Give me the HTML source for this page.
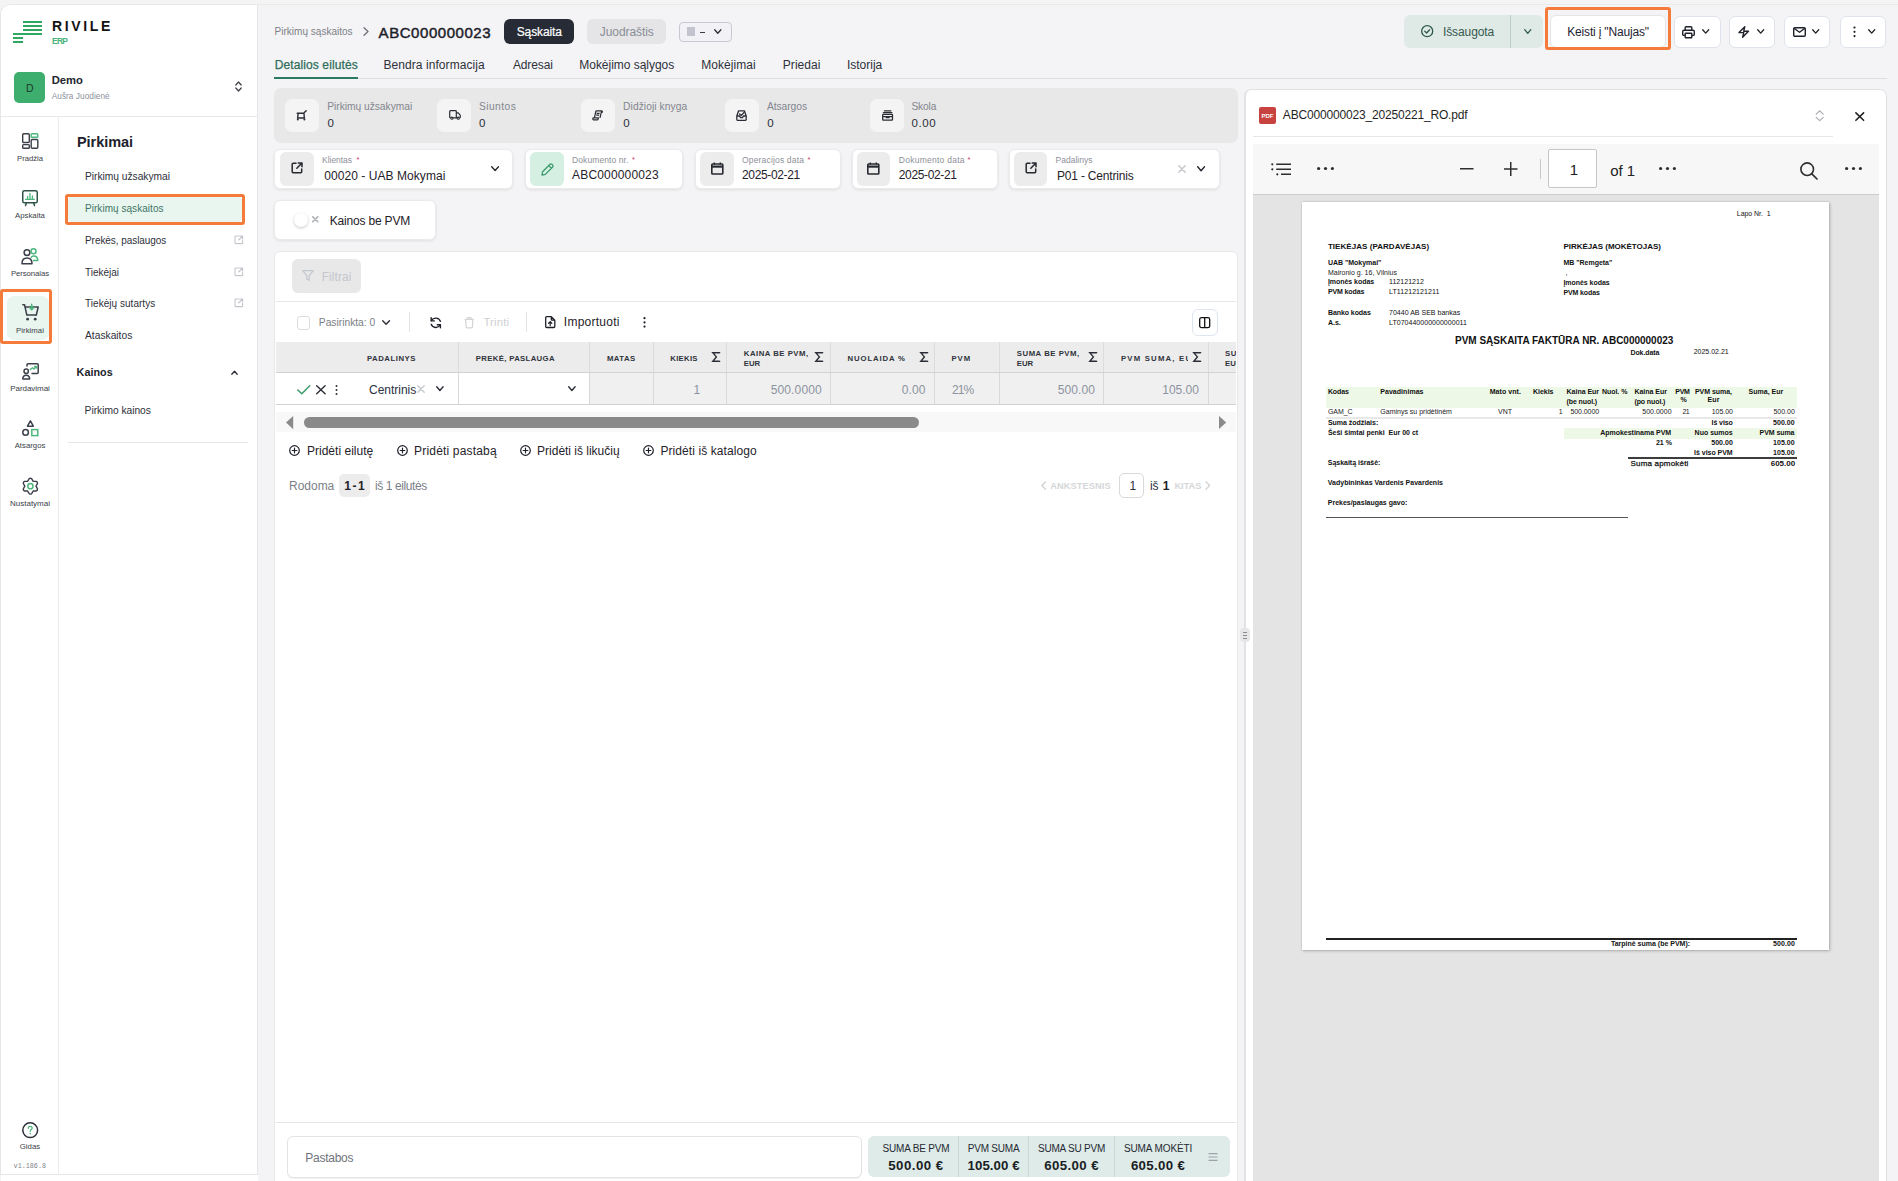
<!DOCTYPE html>
<html><head><meta charset="utf-8">
<style>
*{box-sizing:border-box;margin:0;padding:0}
html,body{width:1898px;height:1181px;overflow:hidden;background:#f4f4f4;font-family:"Liberation Sans",sans-serif;color:#20232b;position:relative}
.t{position:absolute;white-space:nowrap;line-height:1}
.r{position:absolute}
svg{position:absolute;overflow:visible}
</style></head><body>
<div class="r" style="left:258px;top:4px;width:1640px;height:1177px;background:#f4f4f6;border-top:1px solid #e9e9e9"></div>
<div class="r" style="left:0px;top:4px;width:258px;height:1171px;background:#fff;border:1px solid #e6e6e6;border-top-color:#e9e9e9;border-top-left-radius:10px"></div>
<div class="r" style="left:1px;top:1175px;width:257px;height:6px;background:#fff"></div>
<div class="r" style="left:1px;top:116px;width:257px;height:1px;background:#e9e9e9"></div>
<div class="r" style="left:58px;top:117px;width:1px;height:1057px;background:#ececec"></div>
<div class="r" style="left:23px;top:21px;width:19px;height:2px;background:#2fa862"></div>
<div class="r" style="left:23px;top:25px;width:19px;height:2px;background:#2fa862"></div>
<div class="r" style="left:23px;top:29px;width:19px;height:2px;background:#2fa862"></div>
<div class="r" style="left:13px;top:33px;width:29px;height:2px;background:#2fa862"></div>
<div class="r" style="left:13px;top:37px;width:10px;height:2px;background:#2fa862"></div>
<div class="r" style="left:13px;top:41px;width:10px;height:2px;background:#2fa862"></div>
<div class="t" style="top:19.00px;font-size:14.00px;color:#121212;font-weight:bold;letter-spacing:2.656px;left:52.00px;">RIVILE</div>
<div class="t" style="top:37.00px;font-size:8.50px;color:#48b37a;font-weight:bold;letter-spacing:-0.739px;left:52.00px;">ERP</div>
<div class="r" style="left:14px;top:72px;width:31px;height:31px;background:#3dae6e;border-radius:5px"></div>
<div class="t" style="top:83.00px;font-size:10.50px;color:#1c3b2b;left:-120.20px;width:300px;text-align:center;">D</div>
<div class="t" style="top:75.00px;font-size:11.25px;color:#22252d;font-weight:bold;letter-spacing:0.014px;left:51.70px;">Demo</div>
<div class="t" style="top:93.00px;font-size:8.25px;color:#8d919b;letter-spacing:0.051px;left:51.70px;">Aušra Juodienė</div>
<svg style="left:235px;top:81px;" width="7" height="11" viewBox="0 0 7 11" fill="none"><path d="M0.8 4 L3.5 1 L6.2 4 M0.8 7 L3.5 10 L6.2 7" stroke="#3a3d45" stroke-width="1.2" stroke-linecap="round" stroke-linejoin="round"/></svg>
<svg style="left:22px;top:133px;" width="16" height="16" viewBox="0 0 16 16" fill="none"><rect x="0.7" y="0.7" width="6.6" height="8.8" rx="1" stroke="#3b3f49" stroke-width="1.4"/>
<rect x="9.2" y="0.7" width="6.6" height="3.6" rx="0.8" stroke="#4cb77c" stroke-width="1.4"/>
<rect x="0.7" y="11.6" width="6.6" height="3.7" rx="0.8" stroke="#3b3f49" stroke-width="1.4"/>
<rect x="9.2" y="6.5" width="6.6" height="8.8" rx="1" stroke="#3b3f49" stroke-width="1.4"/></svg>
<div class="t" style="top:155.00px;font-size:7.75px;color:#3a3e48;letter-spacing:-0.046px;left:-120.00px;width:300px;text-align:center;">Pradžia</div>
<svg style="left:22px;top:190px;" width="16" height="16" viewBox="0 0 16 16" fill="none"><rect x="0.75" y="0.75" width="14.5" height="12" rx="1.6" stroke="#2f5547" stroke-width="1.5"/>
<path d="M3.5 15.5 L4.5 12.8 M12.5 15.5 L11.5 12.8" stroke="#2f5547" stroke-width="1.5" stroke-linecap="round"/>
<path d="M3.6 9.3 H12.4 M5.6 9 V6.5 M8 9 V3.5 M10.4 9 V6" stroke="#4cb77c" stroke-width="1.3" stroke-linecap="round"/></svg>
<div class="t" style="top:212.00px;font-size:7.75px;color:#3a3e48;letter-spacing:0.011px;left:-120.00px;width:300px;text-align:center;">Apskaita</div>
<svg style="left:21px;top:248px;" width="18" height="17" viewBox="0 0 18 17" fill="none"><circle cx="6" cy="4.6" r="2.9" stroke="#3b3f49" stroke-width="1.5"/>
<path d="M1 15.7 C1 11.5 3.3 10 6 10 C8.7 10 11 11.5 11 15.7 Z" stroke="#3b3f49" stroke-width="1.5" stroke-linejoin="round"/>
<circle cx="12.5" cy="3.3" r="2.5" stroke="#4cb77c" stroke-width="1.5"/>
<path d="M10.2 9.3 C10.8 8.4 11.6 8 12.5 8 C15 8 16.8 9.5 16.8 12.6 H12.5" stroke="#4cb77c" stroke-width="1.5" stroke-linecap="round" stroke-linejoin="round"/></svg>
<div class="t" style="top:270.00px;font-size:7.75px;color:#3a3e48;letter-spacing:-0.064px;left:-120.00px;width:300px;text-align:center;">Personalas</div>
<div class="r" style="left:7px;top:296px;width:42px;height:44px;background:#e9f5ef;border-radius:7px"></div>
<svg style="left:22px;top:304px;" width="17" height="17" viewBox="0 0 17 17" fill="none"><path d="M0.8 0.8 H2.6 L4.8 11 H14.3" stroke="#3b3f49" stroke-width="1.5" stroke-linecap="round" stroke-linejoin="round"/>
<path d="M3.3 3 H16.2 L14.3 11" stroke="#3b3f49" stroke-width="1.5" stroke-linecap="round" stroke-linejoin="round"/>
<circle cx="5.6" cy="15.2" r="1.4" fill="#3b3f49"/><circle cx="13.2" cy="15.2" r="1.4" fill="#3b3f49"/>
<path d="M9.7 0.3 V5.6 M7.6 3.6 L9.7 5.8 L11.8 3.6" stroke="#4cb77c" stroke-width="1.5" stroke-linecap="round" stroke-linejoin="round"/></svg>
<div class="t" style="top:327.00px;font-size:7.75px;color:#3a3e48;letter-spacing:0.063px;left:-120.00px;width:300px;text-align:center;">Pirkimai</div>
<div class="r" style="left:0px;top:289px;width:52px;height:55px;border:3px solid #f57b3a;border-radius:3px"></div>
<svg style="left:22px;top:363px;" width="17" height="17" viewBox="0 0 17 17" fill="none"><path d="M5 3 V1.8 C5 1.2 5.5 0.8 6 0.8 H15.2 C15.8 0.8 16.2 1.2 16.2 1.8 V9.5 C16.2 10 15.8 10.5 15.2 10.5 H10" stroke="#3b3f49" stroke-width="1.5" stroke-linecap="round"/>
<path d="M8.3 6.5 L10.5 4.8 L12 6 L14.2 3.5 M12.6 3.4 H14.3 V5" stroke="#4cb77c" stroke-width="1.4" stroke-linecap="round" stroke-linejoin="round"/>
<circle cx="4.2" cy="8.2" r="2.2" stroke="#3b3f49" stroke-width="1.5"/>
<path d="M0.8 16 C0.8 13.2 2.3 12.2 4.2 12.2 C6.1 12.2 7.6 13.2 7.6 16 Z" stroke="#3b3f49" stroke-width="1.5" stroke-linejoin="round"/></svg>
<div class="t" style="top:385.00px;font-size:8.00px;color:#3a3e48;letter-spacing:-0.046px;left:-120.00px;width:300px;text-align:center;">Pardavimai</div>
<svg style="left:22px;top:420px;" width="17" height="17" viewBox="0 0 17 17" fill="none"><path d="M8.4 0.9 L11.3 6.2 H5.5 Z" stroke="#3b3f49" stroke-width="1.5" stroke-linejoin="round"/>
<circle cx="3.6" cy="12.4" r="2.8" stroke="#3b3f49" stroke-width="1.5"/>
<rect x="9.8" y="9.6" width="6" height="6" stroke="#4cb77c" stroke-width="1.5"/></svg>
<div class="t" style="top:442.00px;font-size:7.75px;color:#3a3e48;letter-spacing:0.016px;left:-120.00px;width:300px;text-align:center;">Atsargos</div>
<svg style="left:22.5px;top:478px;" width="15" height="16.5" viewBox="0 0 15 16.5" fill="none"><path d="M4.60 3.35 L6.21 0.69 Q7.40 -0.10 8.59 0.69 L10.20 3.35 L13.31 3.42 Q14.59 4.05 14.50 5.48 L13.00 8.20 L14.50 10.92 Q14.59 12.35 13.31 12.98 L10.20 13.05 L8.59 15.71 Q7.40 16.50 6.21 15.71 L4.60 13.05 L1.49 12.98 Q0.21 12.35 0.30 10.92 L1.80 8.20 L0.30 5.48 Q0.21 4.05 1.49 3.42 L4.60 3.35 Z" stroke="#3b3f49" stroke-width="1.4" stroke-linejoin="round"/>
<circle cx="7.4" cy="8.2" r="2.6" stroke="#4cb77c" stroke-width="1.5"/></svg>
<div class="t" style="top:500.00px;font-size:8.00px;color:#3a3e48;letter-spacing:-0.024px;left:-120.00px;width:300px;text-align:center;">Nustatymai</div>
<svg style="left:22px;top:1122px;" width="17" height="17" viewBox="0 0 17 17" fill="none"><circle cx="8.2" cy="8.2" r="7.4" stroke="#2b2f38" stroke-width="1.5"/>
<path d="M6.3 6.3 C6.3 5.1 7.2 4.4 8.3 4.4 C9.4 4.4 10.2 5.1 10.2 6.1 C10.2 7.5 8.3 7.6 8.3 9.2" stroke="#4cb77c" stroke-width="1.3" stroke-linecap="round"/>
<circle cx="8.3" cy="11.6" r="0.8" fill="#4cb77c"/></svg>
<div class="t" style="top:1143.00px;font-size:7.75px;color:#3a3e48;letter-spacing:0.064px;left:-120.00px;width:300px;text-align:center;">Gidas</div>
<div class="t" style="top:1162.79px;font-size:6.75px;color:#7f838b;font-family:'Liberation Mono',monospace;left:-120.20px;width:300px;text-align:center;">v1.186.8</div>
<div class="t" style="top:135.00px;font-size:14.50px;color:#20232b;font-weight:bold;letter-spacing:-0.060px;left:77.00px;">Pirkimai</div>
<div class="t" style="top:172.00px;font-size:10.25px;color:#2e313a;letter-spacing:-0.027px;left:85.00px;">Pirkimų užsakymai</div>
<div class="r" style="left:68px;top:197px;width:174px;height:25px;background:#e9f5ef;border-radius:4px"></div>
<div class="t" style="top:204.00px;font-size:10.00px;color:#3d7566;letter-spacing:0.044px;left:85.00px;">Pirkimų sąskaitos</div>
<div class="r" style="left:65px;top:194px;width:180px;height:31px;border:3px solid #f57b3a;border-radius:3px"></div>
<div class="t" style="top:236.00px;font-size:10.00px;color:#2e313a;letter-spacing:-0.061px;left:85.00px;">Prekės, paslaugos</div>
<div class="t" style="top:268.00px;font-size:10.00px;color:#2e313a;left:85.00px;">Tiekėjai</div>
<div class="t" style="top:299.00px;font-size:10.00px;color:#2e313a;letter-spacing:0.036px;left:85.00px;">Tiekėjų sutartys</div>
<div class="t" style="top:331.00px;font-size:10.25px;color:#2e313a;left:85.00px;">Ataskaitos</div>
<svg style="left:234px;top:235px;" width="10" height="10" viewBox="0 0 10 10" fill="none"><path d="M4.5 1 H1.6 C1.2 1 1 1.2 1 1.6 V8 C1 8.4 1.2 8.6 1.6 8.6 H8 C8.4 8.6 8.6 8.4 8.6 8 V5.2 M5.6 1 H8.6 V4 M8.6 1 L4.6 5" stroke="#c3c6cc" stroke-width="1.1" stroke-linecap="round" stroke-linejoin="round"/></svg>
<svg style="left:234px;top:267px;" width="10" height="10" viewBox="0 0 10 10" fill="none"><path d="M4.5 1 H1.6 C1.2 1 1 1.2 1 1.6 V8 C1 8.4 1.2 8.6 1.6 8.6 H8 C8.4 8.6 8.6 8.4 8.6 8 V5.2 M5.6 1 H8.6 V4 M8.6 1 L4.6 5" stroke="#c3c6cc" stroke-width="1.1" stroke-linecap="round" stroke-linejoin="round"/></svg>
<svg style="left:234px;top:298px;" width="10" height="10" viewBox="0 0 10 10" fill="none"><path d="M4.5 1 H1.6 C1.2 1 1 1.2 1 1.6 V8 C1 8.4 1.2 8.6 1.6 8.6 H8 C8.4 8.6 8.6 8.4 8.6 8 V5.2 M5.6 1 H8.6 V4 M8.6 1 L4.6 5" stroke="#c3c6cc" stroke-width="1.1" stroke-linecap="round" stroke-linejoin="round"/></svg>
<div class="t" style="top:367.00px;font-size:10.75px;color:#20232b;font-weight:bold;letter-spacing:0.052px;left:76.60px;">Kainos</div>
<svg style="left:231px;top:370px;" width="7" height="5" viewBox="0 0 7 5" fill="none"><path d="M0.8 4.2 L3.5 1.2 L6.2 4.2" stroke="#2b2e36" stroke-width="1.3" stroke-linecap="round" stroke-linejoin="round"/></svg>
<div class="t" style="top:406.00px;font-size:10.25px;color:#2e313a;letter-spacing:-0.027px;left:84.60px;">Pirkimo kainos</div>
<div class="r" style="left:68px;top:442px;width:180px;height:1px;background:#e6e6e6"></div>
<div class="t" style="top:27.00px;font-size:10.00px;color:#7c7f87;letter-spacing:0.013px;left:274.60px;">Pirkimų sąskaitos</div>
<svg style="left:362.5px;top:27px;" width="6" height="9" viewBox="0 0 6 9" fill="none"><path d="M1 0.8 L5 4.5 L1 8.2" stroke="#6d7078" stroke-width="1.3" stroke-linecap="round" stroke-linejoin="round"/></svg>
<div class="t" style="top:25.00px;font-size:15.00px;color:#1d2029;letter-spacing:0.552px;left:378.60px;-webkit-text-stroke:0.45px #1d2029">ABC000000023</div>
<div class="r" style="left:504px;top:19px;width:70px;height:25px;background:#272b36;border-radius:6px"></div>
<div class="t" style="top:26.00px;font-size:12.00px;color:#ffffff;letter-spacing:-0.118px;left:516.70px;-webkit-text-stroke:0.2px #fff">Sąskaita</div>
<div class="r" style="left:587px;top:19px;width:79px;height:25px;background:#e5e5e7;border-radius:6px"></div>
<div class="t" style="top:26.00px;font-size:12.00px;color:#8a8d95;letter-spacing:-0.077px;left:599.80px;">Juodraštis</div>
<div class="r" style="left:679px;top:22px;width:53px;height:20px;background:#f1f1f6;border:1px solid #c8c9d3;border-radius:4px"></div>
<div class="r" style="left:687px;top:27px;width:8px;height:9px;background:#c3c3cf"></div>
<div class="r" style="left:700px;top:32px;width:5px;height:1px;background:#3a3d45"></div>
<svg style="left:713.6px;top:29px;" width="7.6" height="5" viewBox="0 0 7.6 5" fill="none"><path d="M0.7 0.7 L3.8 4.3 L6.8999999999999995 0.7" stroke="#2b2e36" stroke-width="1.3" stroke-linecap="round" stroke-linejoin="round"/></svg>
<div class="r" style="left:1404px;top:15px;width:139px;height:33px;background:#dfe9e6;border-radius:6px"></div>
<div class="r" style="left:1510px;top:15px;width:1px;height:33px;background:#b9cec6"></div>
<svg style="left:1421px;top:25.3px;" width="12.5" height="12.5" viewBox="0 0 12.5 12.5" fill="none"><circle cx="6.2" cy="6.2" r="5.5" stroke="#2d5a4b" stroke-width="1.3"/><path d="M3.8 6.3 L5.6 8 L8.6 4.8" stroke="#2d5a4b" stroke-width="1.3" stroke-linecap="round" stroke-linejoin="round"/></svg>
<div class="t" style="top:26.00px;font-size:12.00px;color:#35594d;letter-spacing:-0.105px;left:1443.00px;">Išsaugota</div>
<svg style="left:1523.7px;top:29px;" width="7.5" height="5" viewBox="0 0 7.5 5" fill="none"><path d="M0.7 0.7 L3.75 4.3 L6.8 0.7" stroke="#2d5a4b" stroke-width="1.3" stroke-linecap="round" stroke-linejoin="round"/></svg>
<div class="r" style="left:1550px;top:15px;width:116px;height:33px;background:#fff;border:1px solid #e6e6e6;border-radius:6px"></div>
<div class="t" style="top:26.00px;font-size:12.00px;color:#1f2330;letter-spacing:-0.178px;left:1567.30px;">Keisti į &quot;Naujas&quot;</div>
<div class="r" style="left:1545px;top:7px;width:126px;height:43px;border:3px solid #f57b3a;border-radius:3px"></div>
<div class="r" style="left:1674px;top:16px;width:47px;height:32px;background:#fff;border:1px solid #dfe4ec;border-radius:6px"></div>
<div class="r" style="left:1729px;top:16px;width:46px;height:32px;background:#fff;border:1px solid #dfe4ec;border-radius:6px"></div>
<div class="r" style="left:1784px;top:16px;width:46px;height:32px;background:#fff;border:1px solid #dfe4ec;border-radius:6px"></div>
<div class="r" style="left:1840px;top:16px;width:46px;height:32px;background:#fff;border:1px solid #dfe4ec;border-radius:6px"></div>
<svg style="left:1682.3px;top:25.5px;" width="13" height="12.5" viewBox="0 0 13 12.5" fill="none"><path d="M3.2 4.3 V1.6 C3.2 1.1 3.6 0.7 4.1 0.7 H8.9 C9.4 0.7 9.8 1.1 9.8 1.6 V4.3" stroke="#1e2129" stroke-width="1.4"/><path d="M3 9.4 H1.9 C1.2 9.4 0.7 8.9 0.7 8.2 V5.5 C0.7 4.8 1.2 4.3 1.9 4.3 H11.1 C11.8 4.3 12.3 4.8 12.3 5.5 V8.2 C12.3 8.9 11.8 9.4 11.1 9.4 H10" stroke="#1e2129" stroke-width="1.4"/><rect x="3.2" y="7.2" width="6.6" height="4.6" rx="0.6" stroke="#1e2129" stroke-width="1.4"/></svg>
<svg style="left:1701.9px;top:29.2px;" width="7.4" height="4.8" viewBox="0 0 7.4 4.8" fill="none"><path d="M0.7 0.7 L3.7 4.1 L6.7 0.7" stroke="#1e2129" stroke-width="1.3" stroke-linecap="round" stroke-linejoin="round"/></svg>
<svg style="left:1738px;top:25.7px;" width="11.5" height="12" viewBox="0 0 11.5 12" fill="none"><path d="M6.8 0.7 L1 6.6 H5.8 L4.6 11.3 L10.5 5.3 H5.7 Z" stroke="#1e2129" stroke-width="1.4" stroke-linejoin="round"/></svg>
<svg style="left:1757px;top:29.2px;" width="7.4" height="4.8" viewBox="0 0 7.4 4.8" fill="none"><path d="M0.7 0.7 L3.7 4.1 L6.7 0.7" stroke="#1e2129" stroke-width="1.3" stroke-linecap="round" stroke-linejoin="round"/></svg>
<svg style="left:1793px;top:26.5px;" width="13" height="10" viewBox="0 0 13 10" fill="none"><rect x="0.7" y="0.7" width="11.6" height="8.6" rx="1.2" stroke="#1e2129" stroke-width="1.4"/><path d="M1 1.3 L6.5 5.3 L12 1.3" stroke="#1e2129" stroke-width="1.4" stroke-linejoin="round"/></svg>
<svg style="left:1812px;top:29.2px;" width="7.4" height="4.8" viewBox="0 0 7.4 4.8" fill="none"><path d="M0.7 0.7 L3.7 4.1 L6.7 0.7" stroke="#1e2129" stroke-width="1.3" stroke-linecap="round" stroke-linejoin="round"/></svg>
<svg style="left:1853px;top:26px;" width="3" height="12" viewBox="0 0 3 12" fill="none"><circle cx="1.5" cy="1.5" r="1.1" fill="#1e2129"/><circle cx="1.5" cy="5.8" r="1.1" fill="#1e2129"/><circle cx="1.5" cy="10.1" r="1.1" fill="#1e2129"/></svg>
<svg style="left:1867.7px;top:29.2px;" width="7.4" height="4.8" viewBox="0 0 7.4 4.8" fill="none"><path d="M0.7 0.7 L3.7 4.1 L6.7 0.7" stroke="#1e2129" stroke-width="1.3" stroke-linecap="round" stroke-linejoin="round"/></svg>
<div class="r" style="left:274px;top:78px;width:1613px;height:1px;background:#dedee0"></div>
<div class="t" style="top:59.00px;font-size:12.00px;color:#2f6e5a;letter-spacing:0.108px;left:274.70px;-webkit-text-stroke:0.25px #2f6e5a">Detalios eilutės</div>
<div class="r" style="left:274px;top:77px;width:84px;height:2px;background:#2b7a5f"></div>
<div class="t" style="top:59.00px;font-size:12.00px;color:#2e313a;letter-spacing:0.067px;left:383.50px;">Bendra informacija</div>
<div class="t" style="top:59.00px;font-size:12.00px;color:#2e313a;letter-spacing:-0.098px;left:512.90px;">Adresai</div>
<div class="t" style="top:59.00px;font-size:12.00px;color:#2e313a;letter-spacing:-0.031px;left:579.30px;">Mokėjimo sąlygos</div>
<div class="t" style="top:59.00px;font-size:12.00px;color:#2e313a;letter-spacing:0.073px;left:701.20px;">Mokėjimai</div>
<div class="t" style="top:59.00px;font-size:12.00px;color:#2e313a;letter-spacing:0.041px;left:782.80px;">Priedai</div>
<div class="t" style="top:59.00px;font-size:12.00px;color:#2e313a;left:846.90px;">Istorija</div>
<div class="r" style="left:274px;top:88px;width:964px;height:55px;background:#e8e8e8;border-radius:7px"></div>
<div class="r" style="left:285px;top:99px;width:34px;height:33px;background:#f4f4f4;border-radius:7px"></div>
<svg style="left:296.40000000000003px;top:110px;" width="11" height="11" viewBox="0 0 11 11" fill="none"><path d="M1.2 3.2 H8 M2.2 3.2 L1.6 8 H8.6 M8 3.2 L8.3 8 M8.3 2.6 L10.2 0.8" stroke="#2a2d35" stroke-width="1.4" stroke-linecap="round" stroke-linejoin="round"/><circle cx="1.8" cy="9.4" r="1" fill="#2a2d35"/><circle cx="8.4" cy="9.4" r="1" fill="#2a2d35"/></svg>
<div class="t" style="top:102.00px;font-size:10.25px;color:#83868f;letter-spacing:-0.027px;left:327.20px;">Pirkimų užsakymai</div>
<div class="t" style="top:118.00px;font-size:11.50px;color:#2a2e3a;letter-spacing:0.204px;left:327.40px;">0</div>
<div class="r" style="left:437px;top:99px;width:34px;height:33px;background:#f4f4f4;border-radius:7px"></div>
<svg style="left:448.5px;top:110px;" width="11" height="11" viewBox="0 0 11 11" fill="none"><path d="M1.8 7.8 H1.4 C1 7.8 0.7 7.5 0.7 7.1 V1.4 C0.7 1 1 0.7 1.4 0.7 H6.6 C7 0.7 7.3 1 7.3 1.4 V7.8 H4 M7.3 2.8 H9.3 L11.3 5.3 V7.1 C11.3 7.5 11 7.8 10.6 7.8 M7.3 7.8 H8" stroke="#2a2d35" stroke-width="1.2" stroke-linejoin="round"/><circle cx="2.9" cy="8.2" r="1.1" stroke="#2a2d35" stroke-width="1.1"/><circle cx="9.3" cy="8.2" r="1.1" stroke="#2a2d35" stroke-width="1.1"/></svg>
<div class="t" style="top:102.00px;font-size:10.25px;color:#83868f;letter-spacing:0.468px;left:478.90px;">Siuntos</div>
<div class="t" style="top:118.00px;font-size:11.50px;color:#2a2e3a;letter-spacing:0.204px;left:479.10px;">0</div>
<div class="r" style="left:581px;top:99px;width:34px;height:33px;background:#f4f4f4;border-radius:7px"></div>
<svg style="left:592.3px;top:110px;" width="11" height="11" viewBox="0 0 11 11" fill="none"><path d="M3 9.8 H1.6 C1 9.8 0.7 9.3 0.8 8.8 L1.2 7.8 H6.5 L6 9.4 C5.9 9.7 5.6 9.9 5.3 9.9 H3 M2.4 7.8 L3.8 1.5 C3.9 1 4.3 0.8 4.8 0.8 H9.6 L8 7.8 M4.6 3.3 H7.6 M4.2 5.2 H7.2 M9.6 0.8 C10.3 0.8 10.5 1.5 10.2 2.3 H8.8" stroke="#2a2d35" stroke-width="1.2" stroke-linejoin="round"/></svg>
<div class="t" style="top:102.00px;font-size:10.25px;color:#83868f;letter-spacing:0.059px;left:623.10px;">Didžioji knyga</div>
<div class="t" style="top:118.00px;font-size:11.50px;color:#2a2e3a;letter-spacing:0.204px;left:623.30px;">0</div>
<div class="r" style="left:725px;top:99px;width:34px;height:33px;background:#f4f4f4;border-radius:7px"></div>
<svg style="left:736.1999999999999px;top:110px;" width="11" height="11" viewBox="0 0 11 11" fill="none"><path d="M0.8 6 L2.6 0.8 H8.4 L10.2 6 V9.6 C10.2 10 9.9 10.3 9.5 10.3 H1.5 C1.1 10.3 0.8 10 0.8 9.6 Z M0.8 6 H3.6 L4.5 7.6 H6.5 L7.4 6 H10.2" stroke="#2a2d35" stroke-width="1.3" stroke-linejoin="round"/><path d="M3.5 4 L5.2 5.5 L8 2.5" stroke="#2a2d35" stroke-width="1.2" stroke-linecap="round" stroke-linejoin="round"/></svg>
<div class="t" style="top:102.00px;font-size:10.25px;color:#83868f;letter-spacing:-0.064px;left:767.00px;">Atsargos</div>
<div class="t" style="top:118.00px;font-size:11.50px;color:#2a2e3a;letter-spacing:0.204px;left:767.20px;">0</div>
<div class="r" style="left:870px;top:99px;width:34px;height:33px;background:#f4f4f4;border-radius:7px"></div>
<svg style="left:881.5999999999999px;top:110px;" width="11" height="11" viewBox="0 0 11 11" fill="none"><path d="M2.3 0.8 H8.9 M1.3 2.7 H9.9" stroke="#2a2d35" stroke-width="1.2" stroke-linecap="round"/><rect x="0.7" y="4.4" width="9.8" height="5.8" rx="0.6" stroke="#2a2d35" stroke-width="1.3"/><path d="M0.8 6.6 H10.4 M4.2 6.6 V7.6 H7 V6.6" stroke="#2a2d35" stroke-width="1.1"/></svg>
<div class="t" style="top:102.00px;font-size:10.25px;color:#83868f;letter-spacing:-0.160px;left:911.40px;">Skola</div>
<div class="t" style="top:118.00px;font-size:11.50px;color:#2a2e3a;letter-spacing:0.539px;left:911.60px;">0.00</div>
<div class="r" style="left:274px;top:149px;width:239px;height:40px;background:#fff;border:1px solid #ebebeb;border-radius:6px;box-shadow:0 1px 3px rgba(0,0,0,0.09)"></div>
<div class="r" style="left:280px;top:152px;width:34px;height:34px;background:#ececec;border-radius:6px"></div>
<svg style="left:290.5px;top:161.5px;" width="12" height="12" viewBox="0 0 12 12" fill="none"><path d="M5 1.3 H2.2 C1.6 1.3 1.2 1.7 1.2 2.3 V9.8 C1.2 10.4 1.6 10.8 2.2 10.8 H9.7 C10.3 10.8 10.7 10.4 10.7 9.8 V7" stroke="#262930" stroke-width="1.5" stroke-linecap="round"/><path d="M7.2 1 H11 V4.8 M11 1 L5.8 6.2" stroke="#262930" stroke-width="1.5" stroke-linecap="round" stroke-linejoin="round"/></svg>
<div class="t" style="top:156.00px;font-size:8.50px;color:#8d9099;letter-spacing:-0.055px;left:322.10px;">Klientas</div>
<div class="t" style="top:156.00px;font-size:7.50px;color:#d6336c;left:356.50px;">*</div>
<div class="t" style="top:170.00px;font-size:12.00px;color:#1f2229;letter-spacing:0.064px;left:324.20px;">00020 - UAB Mokymai</div>
<svg style="left:491px;top:166px;" width="8.2" height="5.2" viewBox="0 0 8.2 5.2" fill="none"><path d="M0.7 0.7 L4.1 4.5 L7.499999999999999 0.7" stroke="#262930" stroke-width="1.4" stroke-linecap="round" stroke-linejoin="round"/></svg>
<div class="r" style="left:525px;top:149px;width:158px;height:40px;background:#fff;border:1px solid #ebebeb;border-radius:6px;box-shadow:0 1px 3px rgba(0,0,0,0.09)"></div>
<div class="r" style="left:530px;top:152px;width:34px;height:34px;background:#d5f0e3;border-radius:6px"></div>
<svg style="left:540.5px;top:162.5px;" width="13" height="13" viewBox="0 0 13 13" fill="none"><path d="M9 1.3 C9.5 0.8 10.3 0.8 10.8 1.3 L11.7 2.2 C12.2 2.7 12.2 3.5 11.7 4 L4.3 11.4 L1 12 L1.6 8.7 Z M7.8 2.6 L10.4 5.2" stroke="#3a9a6c" stroke-width="1.3" stroke-linejoin="round"/></svg>
<div class="t" style="top:156.00px;font-size:8.50px;color:#8d9099;letter-spacing:0.072px;left:572.10px;">Dokumento nr.</div>
<div class="t" style="top:156.00px;font-size:7.50px;color:#d6336c;left:632.00px;">*</div>
<div class="t" style="top:169.00px;font-size:12.00px;color:#1f2229;letter-spacing:0.160px;left:572.10px;">ABC000000023</div>
<div class="r" style="left:695px;top:149px;width:146px;height:40px;background:#fff;border:1px solid #ebebeb;border-radius:6px;box-shadow:0 1px 3px rgba(0,0,0,0.09)"></div>
<div class="r" style="left:700px;top:152px;width:34px;height:34px;background:#ececec;border-radius:6px"></div>
<svg style="left:710.6px;top:162.3px;" width="12.6" height="12.6" viewBox="0 0 12.6 12.6" fill="none"><rect x="0.8" y="2" width="11" height="10" rx="0.8" stroke="#262930" stroke-width="1.6"/><path d="M0.8 4.6 H11.8" stroke="#262930" stroke-width="2.2"/><path d="M3.3 0.6 V2.6 M9.3 0.6 V2.6" stroke="#262930" stroke-width="1.4"/></svg>
<div class="t" style="top:156.00px;font-size:8.50px;color:#8d9099;letter-spacing:0.169px;left:742.00px;">Operacijos data</div>
<div class="t" style="top:156.00px;font-size:7.50px;color:#d6336c;left:807.50px;">*</div>
<div class="t" style="top:169.00px;font-size:12.00px;color:#1f2229;letter-spacing:-0.354px;left:742.00px;">2025-02-21</div>
<div class="r" style="left:852px;top:149px;width:146px;height:40px;background:#fff;border:1px solid #ebebeb;border-radius:6px;box-shadow:0 1px 3px rgba(0,0,0,0.09)"></div>
<div class="r" style="left:857px;top:152px;width:33px;height:34px;background:#ececec;border-radius:6px"></div>
<svg style="left:867.2px;top:162.3px;" width="12.6" height="12.6" viewBox="0 0 12.6 12.6" fill="none"><rect x="0.8" y="2" width="11" height="10" rx="0.8" stroke="#262930" stroke-width="1.6"/><path d="M0.8 4.6 H11.8" stroke="#262930" stroke-width="2.2"/><path d="M3.3 0.6 V2.6 M9.3 0.6 V2.6" stroke="#262930" stroke-width="1.4"/></svg>
<div class="t" style="top:156.00px;font-size:8.50px;color:#8d9099;letter-spacing:0.258px;left:898.80px;">Dokumento data</div>
<div class="t" style="top:156.00px;font-size:7.50px;color:#d6336c;left:967.50px;">*</div>
<div class="t" style="top:169.00px;font-size:12.00px;color:#1f2229;letter-spacing:-0.354px;left:898.80px;">2025-02-21</div>
<div class="r" style="left:1009px;top:149px;width:211px;height:40px;background:#fff;border:1px solid #ebebeb;border-radius:6px;box-shadow:0 1px 3px rgba(0,0,0,0.09)"></div>
<div class="r" style="left:1014px;top:152px;width:33px;height:34px;background:#ececec;border-radius:6px"></div>
<svg style="left:1024.5px;top:161.5px;" width="12" height="12" viewBox="0 0 12 12" fill="none"><path d="M5 1.3 H2.2 C1.6 1.3 1.2 1.7 1.2 2.3 V9.8 C1.2 10.4 1.6 10.8 2.2 10.8 H9.7 C10.3 10.8 10.7 10.4 10.7 9.8 V7" stroke="#262930" stroke-width="1.5" stroke-linecap="round"/><path d="M7.2 1 H11 V4.8 M11 1 L5.8 6.2" stroke="#262930" stroke-width="1.5" stroke-linecap="round" stroke-linejoin="round"/></svg>
<div class="t" style="top:156.00px;font-size:8.50px;color:#8d9099;left:1055.60px;">Padalinys</div>
<div class="t" style="top:170.00px;font-size:12.00px;color:#1f2229;letter-spacing:-0.191px;left:1057.00px;">P01 - Centrinis</div>
<svg style="left:1178.3px;top:164.7px;" width="8" height="8" viewBox="0 0 8 8" fill="none"><path d="M0.8 0.8 L7.2 7.2 M7.2 0.8 L0.8 7.2" stroke="#c5c8cd" stroke-width="1.5" stroke-linecap="round"/></svg>
<svg style="left:1196.8px;top:165.7px;" width="8.2" height="5.5" viewBox="0 0 8.2 5.5" fill="none"><path d="M0.7 0.7 L4.1 4.8 L7.499999999999999 0.7" stroke="#262930" stroke-width="1.4" stroke-linecap="round" stroke-linejoin="round"/></svg>
<div class="r" style="left:274px;top:200px;width:162px;height:40px;background:#fff;border:1px solid #ebebeb;border-radius:6px;box-shadow:0 1px 3px rgba(0,0,0,0.09)"></div>
<div class="r" style="left:294px;top:213px;width:14px;height:14px;background:#fff;border-radius:50%;box-shadow:0 1px 3px rgba(0,0,0,0.22)"></div>
<svg style="left:312px;top:216.3px;" width="6.5" height="6.5" viewBox="0 0 6.5 6.5" fill="none"><path d="M0.8 0.8 L5.7 5.7 M5.7 0.8 L0.8 5.7" stroke="#b5b7bb" stroke-width="1.8" stroke-linecap="round"/></svg>
<div class="t" style="top:215.00px;font-size:12.00px;color:#1f2229;letter-spacing:-0.193px;left:329.80px;">Kainos be PVM</div>
<div class="r" style="left:274px;top:251px;width:964px;height:940px;background:#fff;border:1px solid #e7e7e7;border-radius:6px"></div>
<div class="r" style="left:292px;top:259px;width:69px;height:34px;background:#e8e8e8;border-radius:6px"></div>
<svg style="left:301.5px;top:269.8px;" width="12" height="11" viewBox="0 0 12 11" fill="none"><path d="M0.7 0.7 H11.3 L7.2 5.6 V10.3 L4.8 9 V5.6 Z" stroke="#c2c6cd" stroke-width="1.2" stroke-linejoin="round"/></svg>
<div class="t" style="top:271.00px;font-size:12.00px;color:#c4c7cd;letter-spacing:0.078px;left:321.70px;">Filtrai</div>
<div class="r" style="left:276px;top:301px;width:960px;height:1px;background:#e7e7e7"></div>
<div class="r" style="left:297px;top:316px;width:13px;height:14px;background:#fff;border:1px solid #dcdcdc;border-radius:3px"></div>
<div class="t" style="top:318.00px;font-size:10.25px;color:#7a7e86;left:318.80px;">Pasirinkta: 0</div>
<svg style="left:381.8px;top:320.3px;" width="8.2" height="5" viewBox="0 0 8.2 5" fill="none"><path d="M0.7 0.7 L4.1 4.3 L7.499999999999999 0.7" stroke="#2b2e36" stroke-width="1.4" stroke-linecap="round" stroke-linejoin="round"/></svg>
<div class="r" style="left:409px;top:312px;width:1px;height:20px;background:#e3e3e3"></div>
<svg style="left:429.7px;top:316.7px;" width="11.6" height="11.6" viewBox="0 0 11.6 11.6" fill="none"><path d="M10.4 4.3 A5 5 0 0 0 1.4 3.6 M1.2 7.3 A5 5 0 0 0 10.2 8" stroke="#1e2129" stroke-width="1.4" stroke-linecap="round"/><path d="M1.2 0.8 V3.9 H4.3 M10.4 10.8 V7.7 H7.3" stroke="#1e2129" stroke-width="1.4" stroke-linecap="round" stroke-linejoin="round"/></svg>
<svg style="left:464.1px;top:316.8px;" width="10.5" height="11.6" viewBox="0 0 10.5 11.6" fill="none"><path d="M0.7 2.3 H9.8 M3.4 2.3 V1.2 C3.4 0.9 3.6 0.7 3.9 0.7 H6.6 C6.9 0.7 7.1 0.9 7.1 1.2 V2.3 M1.6 2.3 L2.2 10.2 C2.2 10.6 2.5 10.9 2.9 10.9 H7.6 C8 10.9 8.3 10.6 8.3 10.2 L8.9 2.3" stroke="#d3d3d3" stroke-width="1.2" stroke-linejoin="round"/></svg>
<div class="t" style="top:317.00px;font-size:11.50px;color:#cfd0d2;letter-spacing:0.114px;left:483.40px;">Trinti</div>
<div class="r" style="left:526px;top:312px;width:1px;height:20px;background:#e3e3e3"></div>
<svg style="left:545.3px;top:316.2px;" width="10.5" height="12.2" viewBox="0 0 10.5 12.2" fill="none"><path d="M6.3 0.7 H1.7 C1.1 0.7 0.7 1.1 0.7 1.7 V10.5 C0.7 11.1 1.1 11.5 1.7 11.5 H8.8 C9.4 11.5 9.8 11.1 9.8 10.5 V4.2 Z M6.3 0.7 V3.4 C6.3 3.8 6.6 4.2 7 4.2 H9.8" stroke="#1e2129" stroke-width="1.3" stroke-linejoin="round"/><path d="M5.2 9.6 V5.8 M3.6 7.3 L5.2 5.7 L6.8 7.3" stroke="#1e2129" stroke-width="1.2" stroke-linecap="round" stroke-linejoin="round"/></svg>
<div class="t" style="top:316.00px;font-size:12.00px;color:#1f2229;letter-spacing:0.260px;left:563.80px;">Importuoti</div>
<svg style="left:643px;top:317.3px;" width="3" height="11" viewBox="0 0 3 11" fill="none"><circle cx="1.5" cy="1.2" r="1.1" fill="#1e2129"/><circle cx="1.5" cy="5.4" r="1.1" fill="#1e2129"/><circle cx="1.5" cy="9.6" r="1.1" fill="#1e2129"/></svg>
<div class="r" style="left:1192px;top:309px;width:26px;height:27px;background:#fff;border:1px solid #dfe5ee;border-radius:6px"></div>
<svg style="left:1198.8px;top:316.8px;" width="11.4" height="11.4" viewBox="0 0 11.4 11.4" fill="none"><rect x="0.7" y="0.7" width="10" height="10" rx="1.8" stroke="#111" stroke-width="1.3"/><path d="M5.7 0.8 V10.6" stroke="#111" stroke-width="1.3"/></svg>
<div class="r" style="left:276px;top:342px;width:960px;height:30px;background:#ececec"></div>
<div class="r" style="left:276px;top:372px;width:960px;height:1px;background:#d3d3d3"></div>
<div class="r" style="left:458px;top:342px;width:1px;height:30px;background:#dcdcdc"></div>
<div class="r" style="left:589px;top:342px;width:1px;height:30px;background:#dcdcdc"></div>
<div class="r" style="left:653px;top:342px;width:1px;height:30px;background:#dcdcdc"></div>
<div class="r" style="left:726px;top:342px;width:1px;height:30px;background:#dcdcdc"></div>
<div class="r" style="left:830px;top:342px;width:1px;height:30px;background:#dcdcdc"></div>
<div class="r" style="left:934px;top:342px;width:1px;height:30px;background:#dcdcdc"></div>
<div class="r" style="left:999px;top:342px;width:1px;height:30px;background:#dcdcdc"></div>
<div class="r" style="left:1103px;top:342px;width:1px;height:30px;background:#dcdcdc"></div>
<div class="r" style="left:1208px;top:342px;width:1px;height:30px;background:#dcdcdc"></div>
<div class="t" style="top:355.00px;font-size:7.75px;color:#30343c;font-weight:bold;letter-spacing:0.536px;left:366.90px;">PADALINYS</div>
<div class="t" style="top:355.00px;font-size:7.75px;color:#30343c;font-weight:bold;letter-spacing:0.341px;left:475.80px;">PREKĖ, PASLAUGA</div>
<div class="t" style="top:355.00px;font-size:7.75px;color:#30343c;font-weight:bold;letter-spacing:0.499px;left:606.90px;">MATAS</div>
<div class="t" style="top:355.00px;font-size:7.75px;color:#30343c;font-weight:bold;letter-spacing:0.272px;left:670.30px;">KIEKIS</div>
<div class="t" style="top:350.00px;font-size:7.75px;color:#30343c;font-weight:bold;letter-spacing:0.502px;left:743.80px;">KAINA BE PVM,</div>
<div class="t" style="top:360.00px;font-size:7.75px;color:#30343c;font-weight:bold;letter-spacing:-0.082px;left:743.80px;">EUR</div>
<div class="t" style="top:355.00px;font-size:7.75px;color:#30343c;font-weight:bold;letter-spacing:0.860px;left:847.60px;">NUOLAIDA %</div>
<div class="t" style="top:355.00px;font-size:7.75px;color:#30343c;font-weight:bold;letter-spacing:0.852px;left:951.60px;">PVM</div>
<div class="t" style="top:350.00px;font-size:7.75px;color:#30343c;font-weight:bold;letter-spacing:0.532px;left:1016.80px;">SUMA BE PVM,</div>
<div class="t" style="top:360.00px;font-size:7.75px;color:#30343c;font-weight:bold;letter-spacing:-0.082px;left:1016.80px;">EUR</div>
<div class="r" style="left:1110px;top:342px;width:78px;height:30px;overflow:hidden">
<div class="t" style="top:13.00px;font-size:7.75px;color:#30343c;font-weight:bold;letter-spacing:1.214px;left:10.90px;">PVM SUMA, EUR</div>
</div>
<div class="r" style="left:1208.5px;top:342px;width:27.5px;height:30px;overflow:hidden">
<div class="t" style="top:8.00px;font-size:7.75px;color:#30343c;font-weight:bold;letter-spacing:0.532px;left:16.60px;">SUMA SU PVM,</div>
<div class="t" style="top:18.00px;font-size:7.75px;color:#30343c;font-weight:bold;letter-spacing:-0.082px;left:16.60px;">EUR</div>
</div>
<svg style="left:711.7px;top:351.9px;" width="8.2" height="10" viewBox="0 0 8.2 10" fill="none"><path d="M7.5 1.2 V0.7 H0.8 L4.4 4.9 L0.8 9.3 H7.5 V8.8" stroke="#2b2e36" stroke-width="1.4" stroke-linejoin="miter" fill="none"/></svg>
<svg style="left:815.4px;top:351.9px;" width="8.2" height="10" viewBox="0 0 8.2 10" fill="none"><path d="M7.5 1.2 V0.7 H0.8 L4.4 4.9 L0.8 9.3 H7.5 V8.8" stroke="#2b2e36" stroke-width="1.4" stroke-linejoin="miter" fill="none"/></svg>
<svg style="left:919.7px;top:351.9px;" width="8.2" height="10" viewBox="0 0 8.2 10" fill="none"><path d="M7.5 1.2 V0.7 H0.8 L4.4 4.9 L0.8 9.3 H7.5 V8.8" stroke="#2b2e36" stroke-width="1.4" stroke-linejoin="miter" fill="none"/></svg>
<svg style="left:1088.5px;top:351.9px;" width="8.2" height="10" viewBox="0 0 8.2 10" fill="none"><path d="M7.5 1.2 V0.7 H0.8 L4.4 4.9 L0.8 9.3 H7.5 V8.8" stroke="#2b2e36" stroke-width="1.4" stroke-linejoin="miter" fill="none"/></svg>
<svg style="left:1192.7px;top:351.9px;" width="8.2" height="10" viewBox="0 0 8.2 10" fill="none"><path d="M7.5 1.2 V0.7 H0.8 L4.4 4.9 L0.8 9.3 H7.5 V8.8" stroke="#2b2e36" stroke-width="1.4" stroke-linejoin="miter" fill="none"/></svg>
<div class="r" style="left:276px;top:373px;width:960px;height:31px;background:#fff"></div>
<div class="r" style="left:589px;top:373px;width:647px;height:31px;background:#f0f0f0"></div>
<div class="r" style="left:458px;top:373px;width:1px;height:31px;background:#d9d9d9"></div>
<div class="r" style="left:589px;top:373px;width:1px;height:31px;background:#d9d9d9"></div>
<div class="r" style="left:653px;top:373px;width:1px;height:31px;background:#d9d9d9"></div>
<div class="r" style="left:726px;top:373px;width:1px;height:31px;background:#d9d9d9"></div>
<div class="r" style="left:830px;top:373px;width:1px;height:31px;background:#d9d9d9"></div>
<div class="r" style="left:934px;top:373px;width:1px;height:31px;background:#d9d9d9"></div>
<div class="r" style="left:999px;top:373px;width:1px;height:31px;background:#d9d9d9"></div>
<div class="r" style="left:1103px;top:373px;width:1px;height:31px;background:#d9d9d9"></div>
<div class="r" style="left:1208px;top:373px;width:1px;height:31px;background:#d9d9d9"></div>
<div class="r" style="left:276px;top:404px;width:960px;height:1px;background:#d3d3d3"></div>
<svg style="left:296.7px;top:385.3px;" width="13.5" height="9.5" viewBox="0 0 13.5 9.5" fill="none"><path d="M0.8 5 L4.8 8.7 L12.7 0.8" stroke="#3a9a6c" stroke-width="1.5" stroke-linecap="round" stroke-linejoin="round"/></svg>
<svg style="left:316.2px;top:385.3px;" width="9.8" height="9.5" viewBox="0 0 9.8 9.5" fill="none"><path d="M0.7 0.7 L9.1 8.8 M9.1 0.7 L0.7 8.8" stroke="#2a2d35" stroke-width="1.4" stroke-linecap="round"/></svg>
<svg style="left:335px;top:385px;" width="3" height="10" viewBox="0 0 3 10" fill="none"><circle cx="1.5" cy="1.1" r="1" fill="#2a2d35"/><circle cx="1.5" cy="5" r="1" fill="#2a2d35"/><circle cx="1.5" cy="8.9" r="1" fill="#2a2d35"/></svg>
<div class="t" style="top:384.00px;font-size:12.00px;color:#2b3040;letter-spacing:-0.019px;left:369.00px;">Centrinis</div>
<svg style="left:417px;top:385px;" width="8" height="8" viewBox="0 0 8 8" fill="none"><path d="M0.8 0.8 L7.2 7.2 M7.2 0.8 L0.8 7.2" stroke="#c5c8cd" stroke-width="1.4" stroke-linecap="round"/></svg>
<svg style="left:436.4px;top:386.3px;" width="7.8" height="5.2" viewBox="0 0 7.8 5.2" fill="none"><path d="M0.7 0.7 L3.9 4.5 L7.1 0.7" stroke="#2b2e36" stroke-width="1.4" stroke-linecap="round" stroke-linejoin="round"/></svg>
<svg style="left:567.5px;top:386.3px;" width="7.8" height="5.2" viewBox="0 0 7.8 5.2" fill="none"><path d="M0.7 0.7 L3.9 4.5 L7.1 0.7" stroke="#2b2e36" stroke-width="1.4" stroke-linecap="round" stroke-linejoin="round"/></svg>
<div class="t" style="top:384.00px;font-size:12.00px;color:#8c93a0;left:300.20px;width:400.000px;text-align:right;">1</div>
<div class="t" style="top:384.00px;font-size:12.00px;color:#8c93a0;letter-spacing:0.135px;left:421.70px;width:400.135px;text-align:right;">500.0000</div>
<div class="t" style="top:384.00px;font-size:12.00px;color:#8c93a0;letter-spacing:0.115px;left:525.50px;width:400.115px;text-align:right;">0.00</div>
<div class="t" style="top:384.00px;font-size:12.00px;color:#8c93a0;letter-spacing:-0.859px;left:951.90px;">21%</div>
<div class="t" style="top:384.00px;font-size:12.00px;color:#8c93a0;letter-spacing:0.079px;left:694.90px;width:400.079px;text-align:right;">500.00</div>
<div class="t" style="top:384.00px;font-size:12.00px;color:#8c93a0;letter-spacing:-0.021px;left:798.90px;width:399.979px;text-align:right;">105.00</div>
<div class="r" style="left:276px;top:412px;width:960px;height:20px;background:#f8f8f8"></div>
<svg style="left:285.8px;top:415.8px;" width="7.2" height="13.2" viewBox="0 0 7.2 13.2" fill="none"><path d="M7.2 0 V13.2 L0 6.6 Z" fill="#8a8a8a"/></svg>
<div class="r" style="left:304px;top:417px;width:615px;height:11px;background:#8a8a8a;border-radius:6px"></div>
<svg style="left:1219px;top:416.2px;" width="7.2" height="13" viewBox="0 0 7.2 13" fill="none"><path d="M0 0 V13 L7.2 6.5 Z" fill="#8a8a8a"/></svg>
<svg style="left:289px;top:445.2px;" width="11" height="11" viewBox="0 0 11 11" fill="none"><circle cx="5.5" cy="5.5" r="4.8" stroke="#1e2129" stroke-width="1.2"/><path d="M5.5 3.2 V7.8 M3.2 5.5 H7.8" stroke="#1e2129" stroke-width="1.2" stroke-linecap="round"/></svg>
<div class="t" style="top:445.00px;font-size:12.00px;color:#1f2229;letter-spacing:0.028px;left:306.90px;">Pridėti eilutę</div>
<svg style="left:396.5px;top:445.2px;" width="11" height="11" viewBox="0 0 11 11" fill="none"><circle cx="5.5" cy="5.5" r="4.8" stroke="#1e2129" stroke-width="1.2"/><path d="M5.5 3.2 V7.8 M3.2 5.5 H7.8" stroke="#1e2129" stroke-width="1.2" stroke-linecap="round"/></svg>
<div class="t" style="top:445.00px;font-size:12.00px;color:#1f2229;letter-spacing:0.175px;left:414.10px;">Pridėti pastabą</div>
<svg style="left:519.5px;top:445.2px;" width="11" height="11" viewBox="0 0 11 11" fill="none"><circle cx="5.5" cy="5.5" r="4.8" stroke="#1e2129" stroke-width="1.2"/><path d="M5.5 3.2 V7.8 M3.2 5.5 H7.8" stroke="#1e2129" stroke-width="1.2" stroke-linecap="round"/></svg>
<div class="t" style="top:445.00px;font-size:12.00px;color:#1f2229;letter-spacing:-0.012px;left:537.10px;">Pridėti iš likučių</div>
<svg style="left:642.5px;top:445.2px;" width="11" height="11" viewBox="0 0 11 11" fill="none"><circle cx="5.5" cy="5.5" r="4.8" stroke="#1e2129" stroke-width="1.2"/><path d="M5.5 3.2 V7.8 M3.2 5.5 H7.8" stroke="#1e2129" stroke-width="1.2" stroke-linecap="round"/></svg>
<div class="t" style="top:445.00px;font-size:12.00px;color:#1f2229;letter-spacing:0.082px;left:660.40px;">Pridėti iš katalogo</div>
<div class="t" style="top:480.00px;font-size:12.00px;color:#7b7f87;letter-spacing:-0.012px;left:289.00px;">Rodoma</div>
<div class="r" style="left:339px;top:474px;width:31px;height:23px;background:#ececec;border-radius:5px"></div>
<div class="t" style="top:480.00px;font-size:12.00px;color:#1f2229;font-weight:bold;letter-spacing:-0.878px;left:344.30px;">1 - 1</div>
<div class="t" style="top:480.00px;font-size:12.00px;color:#7b7f87;letter-spacing:-0.409px;left:375.10px;">iš 1 eilutės</div>
<svg style="left:1040.5px;top:480.5px;" width="5.5" height="9" viewBox="0 0 5.5 9" fill="none"><path d="M4.5 0.8 L0.9 4.5 L4.5 8.2" stroke="#d3d3d3" stroke-width="1.4" stroke-linecap="round" stroke-linejoin="round"/></svg>
<div class="t" style="top:482.00px;font-size:9.25px;color:#d5d6d8;font-weight:bold;letter-spacing:0.075px;left:1050.30px;">ANKSTESNIS</div>
<div class="r" style="left:1119px;top:473px;width:25px;height:25px;background:#fff;border:1px solid #d9d9d9;border-radius:5px"></div>
<div class="t" style="top:480.00px;font-size:12.00px;color:#2b3040;left:1129.60px;">1</div>
<div class="t" style="top:480.00px;font-size:12.00px;color:#2b3040;left:1149.90px;">iš</div>
<div class="t" style="top:480.00px;font-size:12.00px;color:#1f2229;font-weight:bold;left:1162.80px;">1</div>
<div class="t" style="top:482.00px;font-size:9.25px;color:#d5d6d8;font-weight:bold;left:1174.40px;">KITAS</div>
<svg style="left:1205.2px;top:480.5px;" width="5.5" height="9" viewBox="0 0 5.5 9" fill="none"><path d="M1 0.8 L4.6 4.5 L1 8.2" stroke="#d3d3d3" stroke-width="1.4" stroke-linecap="round" stroke-linejoin="round"/></svg>
<div class="r" style="left:276px;top:1122px;width:960px;height:1px;background:#e5e5e5"></div>
<div class="r" style="left:287px;top:1136px;width:575px;height:42px;background:#fff;border:1px solid #e3e3e3;border-radius:6px;box-shadow:0 1px 1px rgba(0,0,0,0.05)"></div>
<div class="t" style="top:1152.00px;font-size:12.00px;color:#6f737b;letter-spacing:-0.262px;left:305.30px;">Pastabos</div>
<div class="r" style="left:868px;top:1136px;width:362px;height:41px;background:#deebe8;border-radius:6px"></div>
<div class="r" style="left:958px;top:1136px;width:1px;height:41px;background:#c9d8d4"></div>
<div class="r" style="left:1028px;top:1136px;width:1px;height:41px;background:#c9d8d4"></div>
<div class="r" style="left:1114px;top:1136px;width:1px;height:41px;background:#c9d8d4"></div>
<div class="t" style="top:1144.00px;font-size:10.00px;color:#262a33;letter-spacing:-0.191px;left:765.90px;width:300px;text-align:center;">SUMA BE PVM</div>
<div class="t" style="top:1159.00px;font-size:13.25px;color:#1a1d24;font-weight:bold;letter-spacing:0.460px;left:765.90px;width:300px;text-align:center;">500.00 €</div>
<div class="t" style="top:1144.00px;font-size:10.00px;color:#262a33;letter-spacing:-0.206px;left:843.60px;width:300px;text-align:center;">PVM SUMA</div>
<div class="t" style="top:1159.00px;font-size:13.25px;color:#1a1d24;font-weight:bold;letter-spacing:0.046px;left:843.60px;width:300px;text-align:center;">105.00 €</div>
<div class="t" style="top:1144.00px;font-size:10.00px;color:#262a33;letter-spacing:-0.216px;left:921.60px;width:300px;text-align:center;">SUMA SU PVM</div>
<div class="t" style="top:1159.00px;font-size:13.25px;color:#1a1d24;font-weight:bold;letter-spacing:0.417px;left:921.60px;width:300px;text-align:center;">605.00 €</div>
<div class="t" style="top:1144.00px;font-size:10.00px;color:#262a33;letter-spacing:-0.096px;left:1008.10px;width:300px;text-align:center;">SUMA MOKĖTI</div>
<div class="t" style="top:1159.00px;font-size:13.25px;color:#1a1d24;font-weight:bold;letter-spacing:0.346px;left:1008.10px;width:300px;text-align:center;">605.00 €</div>
<svg style="left:1207.5px;top:1152.8px;" width="10" height="8" viewBox="0 0 10 8" fill="none"><path d="M0.5 0.7 H9.5 M0.5 4 H9.5 M0.5 7.3 H9.5" stroke="#9ea3a8" stroke-width="1.2"/></svg>
<div class="r" style="left:1244px;top:89px;width:643px;height:1100px;background:#fff;border:1px solid #e2e2e4;border-left:2px solid #e2e2e4;border-radius:7px 7px 0 0"></div>
<svg style="left:1258.9px;top:107.1px;" width="17" height="17" viewBox="0 0 17 17" fill="none"><rect x="0" y="0" width="17" height="17" rx="2" fill="#c8423f"/><text x="8.5" y="11.2" font-family="Liberation Sans" font-weight="bold" font-size="6" fill="#fff" text-anchor="middle">PDF</text></svg>
<div class="t" style="top:109.00px;font-size:12.00px;color:#1f1f1f;letter-spacing:-0.174px;left:1282.80px;">ABC000000023_20250221_RO.pdf</div>
<svg style="left:1815px;top:109.8px;" width="9.5" height="11.5" viewBox="0 0 9.5 11.5" fill="none"><path d="M1.2 4.2 L4.7 0.9 L8.2 4.2 M1.2 7.3 L4.7 10.6 L8.2 7.3" stroke="#a6a8ad" stroke-width="1.1" stroke-linecap="round" stroke-linejoin="round"/></svg>
<svg style="left:1854.8px;top:111.7px;" width="9.5" height="9.2" viewBox="0 0 9.5 9.2" fill="none"><path d="M0.9 0.9 L8.6 8.3 M8.6 0.9 L0.9 8.3" stroke="#222" stroke-width="1.6" stroke-linecap="round"/></svg>
<div class="r" style="left:1253px;top:136px;width:580px;height:1px;background:#e6e6e6"></div>
<div class="r" style="left:1253px;top:144px;width:626px;height:51px;background:#f7f7f7;border-bottom:1px solid #cdcdcd"></div>
<svg style="left:1270.5px;top:162.5px;" width="20.5" height="13" viewBox="0 0 20.5 13" fill="none"><circle cx="1.3" cy="1.3" r="1.1" fill="#2e2e2e"/><circle cx="1.3" cy="6.3" r="1.1" fill="#2e2e2e"/><circle cx="6.3" cy="11.3" r="1.1" fill="#2e2e2e"/><path d="M5.2 1.3 H20 M5.2 6.3 H20 M10 11.3 H20" stroke="#2e2e2e" stroke-width="1.4"/></svg>
<svg style="left:1317.3px;top:166.8px;" width="17" height="3" viewBox="0 0 17 3" fill="none"><circle cx="1.6" cy="1.5" r="1.6" fill="#2e2e2e"/><circle cx="8.5" cy="1.5" r="1.6" fill="#2e2e2e"/><circle cx="15.4" cy="1.5" r="1.6" fill="#2e2e2e"/></svg>
<svg style="left:1459.5px;top:167.7px;" width="13.5" height="1.5" viewBox="0 0 13.5 1.5" fill="none"><path d="M0 0.75 H13.5" stroke="#2e2e2e" stroke-width="1.5"/></svg>
<svg style="left:1503.8px;top:161.7px;" width="13.5" height="14" viewBox="0 0 13.5 14" fill="none"><path d="M0 7 H13.5 M6.75 0 V14" stroke="#2e2e2e" stroke-width="1.5"/></svg>
<div class="r" style="left:1540px;top:159px;width:1px;height:20px;background:#c8c8c8"></div>
<div class="r" style="left:1548px;top:149px;width:49px;height:39px;background:#fff;border:1px solid #c6c6c6;border-radius:2px"></div>
<div class="t" style="top:162.00px;font-size:15.00px;color:#222;left:1569.70px;">1</div>
<div class="t" style="top:163.00px;font-size:15.00px;color:#222;left:1610.20px;">of 1</div>
<svg style="left:1659px;top:166.8px;" width="17" height="3" viewBox="0 0 17 3" fill="none"><circle cx="1.6" cy="1.5" r="1.6" fill="#2e2e2e"/><circle cx="8.5" cy="1.5" r="1.6" fill="#2e2e2e"/><circle cx="15.4" cy="1.5" r="1.6" fill="#2e2e2e"/></svg>
<svg style="left:1799.5px;top:161.5px;" width="18" height="18" viewBox="0 0 18 18" fill="none"><circle cx="7.2" cy="7.2" r="6.3" stroke="#2e2e2e" stroke-width="1.6"/><path d="M11.8 11.8 L17 17" stroke="#2e2e2e" stroke-width="1.7" stroke-linecap="round"/></svg>
<svg style="left:1845.3px;top:166.8px;" width="17" height="3" viewBox="0 0 17 3" fill="none"><circle cx="1.6" cy="1.5" r="1.6" fill="#2e2e2e"/><circle cx="8.5" cy="1.5" r="1.6" fill="#2e2e2e"/><circle cx="15.4" cy="1.5" r="1.6" fill="#2e2e2e"/></svg>
<div class="r" style="left:1253px;top:195px;width:626px;height:990px;background:#e4e4e4"></div>
<div class="r" style="left:1879px;top:144px;width:7px;height:1040px;background:#fff"></div>
<div class="r" style="left:1302px;top:202px;width:527px;height:748px;background:#fff;box-shadow:0 0 1px rgba(0,0,0,0.3), 1px 1px 3px rgba(0,0,0,0.22)"></div>
<div class="t" style="top:210.00px;font-size:7.00px;color:#111;letter-spacing:-0.043px;left:1736.80px;">Lapo Nr.&nbsp; 1</div>
<div class="t" style="top:243.00px;font-size:8.00px;color:#111;font-weight:bold;letter-spacing:0.052px;left:1327.90px;">TIEKĖJAS (PARDAVĖJAS)</div>
<div class="t" style="top:243.00px;font-size:8.00px;color:#111;font-weight:bold;letter-spacing:-0.031px;left:1563.40px;">PIRKĖJAS (MOKĖTOJAS)</div>
<div class="t" style="top:259.00px;font-size:7.00px;color:#111;font-weight:bold;letter-spacing:-0.014px;left:1327.90px;">UAB &quot;Mokymai&quot;</div>
<div class="t" style="top:269.00px;font-size:7.00px;color:#222;letter-spacing:0.012px;left:1327.90px;">Maironio g. 16, Vilnius</div>
<div class="t" style="top:278.00px;font-size:7.00px;color:#111;font-weight:bold;letter-spacing:-0.032px;left:1327.90px;">Įmonės kodas</div>
<div class="t" style="top:278.00px;font-size:7.00px;color:#111;letter-spacing:0.036px;left:1389.00px;">112121212</div>
<div class="t" style="top:288.00px;font-size:7.00px;color:#111;font-weight:bold;letter-spacing:-0.110px;left:1327.90px;">PVM kodas</div>
<div class="t" style="top:288.00px;font-size:7.00px;color:#111;letter-spacing:0.071px;left:1389.00px;">LT11212121211</div>
<div class="t" style="top:309.00px;font-size:7.00px;color:#111;font-weight:bold;letter-spacing:-0.069px;left:1327.90px;">Banko kodas</div>
<div class="t" style="top:309.00px;font-size:7.00px;color:#111;letter-spacing:0.020px;left:1389.00px;">70440 AB SEB bankas</div>
<div class="t" style="top:319.00px;font-size:7.00px;color:#111;font-weight:bold;left:1327.90px;">A.s.</div>
<div class="t" style="top:319.00px;font-size:7.00px;color:#111;letter-spacing:0.036px;left:1389.00px;">LT070440000000000011</div>
<div class="t" style="top:259.00px;font-size:7.00px;color:#111;font-weight:bold;letter-spacing:-0.012px;left:1563.40px;">MB &quot;Remgeta&quot;</div>
<div class="t" style="top:269.00px;font-size:7.00px;color:#111;left:1565.50px;">,</div>
<div class="t" style="top:279.00px;font-size:7.00px;color:#111;font-weight:bold;letter-spacing:-0.032px;left:1563.40px;">Įmonės kodas</div>
<div class="t" style="top:289.00px;font-size:7.00px;color:#111;font-weight:bold;letter-spacing:-0.110px;left:1563.40px;">PVM kodas</div>
<div class="t" style="top:336.00px;font-size:10.00px;color:#111;font-weight:bold;letter-spacing:-0.013px;left:1455.00px;">PVM SĄSKAITA FAKTŪRA NR. ABC000000023</div>
<div class="t" style="top:349.00px;font-size:7.00px;color:#111;font-weight:bold;letter-spacing:-0.112px;left:1630.50px;">Dok.data</div>
<div class="t" style="top:348.00px;font-size:7.00px;color:#111;left:1693.70px;">2025.02.21</div>
<div class="r" style="left:1326px;top:387px;width:471px;height:21px;background:#eef8e6"></div>
<div class="t" style="top:388.00px;font-size:7.00px;color:#111;font-weight:bold;letter-spacing:-0.100px;left:1327.90px;">Kodas</div>
<div class="t" style="top:388.00px;font-size:7.00px;color:#111;font-weight:bold;letter-spacing:0.039px;left:1380.30px;">Pavadinimas</div>
<div class="t" style="top:388.00px;font-size:7.00px;color:#111;font-weight:bold;letter-spacing:0.055px;left:1489.70px;">Mato vnt.</div>
<div class="t" style="top:388.00px;font-size:7.00px;color:#111;font-weight:bold;letter-spacing:-0.044px;left:1533.10px;">Kiekis</div>
<div class="t" style="top:388.00px;font-size:7.00px;color:#111;font-weight:bold;letter-spacing:-0.030px;left:1566.60px;">Kaina Eur</div>
<div class="t" style="top:398.00px;font-size:7.00px;color:#111;font-weight:bold;letter-spacing:-0.105px;left:1566.60px;">(be nuol.)</div>
<div class="t" style="top:388.00px;font-size:7.00px;color:#111;font-weight:bold;letter-spacing:-0.022px;left:1601.90px;">Nuol. %</div>
<div class="t" style="top:388.00px;font-size:7.00px;color:#111;font-weight:bold;letter-spacing:-0.018px;left:1634.40px;">Kaina Eur</div>
<div class="t" style="top:398.00px;font-size:7.00px;color:#111;font-weight:bold;letter-spacing:-0.092px;left:1634.40px;">(po nuol.)</div>
<div class="t" style="top:388.00px;font-size:7.00px;color:#111;font-weight:bold;letter-spacing:-0.293px;left:1675.30px;">PVM</div>
<div class="t" style="top:396.00px;font-size:7.00px;color:#111;font-weight:bold;letter-spacing:-0.313px;left:1680.50px;">%</div>
<div class="t" style="top:388.00px;font-size:7.00px;color:#111;font-weight:bold;letter-spacing:-0.047px;left:1695.00px;">PVM suma,</div>
<div class="t" style="top:396.00px;font-size:7.00px;color:#111;font-weight:bold;letter-spacing:0.132px;left:1707.50px;">Eur</div>
<div class="t" style="top:388.00px;font-size:7.00px;color:#111;font-weight:bold;left:1748.60px;">Suma, Eur</div>
<div class="t" style="top:408.00px;font-size:7.00px;color:#222;letter-spacing:-0.062px;left:1327.90px;">GAM_C</div>
<div class="t" style="top:408.00px;font-size:7.00px;color:#222;left:1380.30px;">Gaminys su pridėtinėm</div>
<div class="t" style="top:408.00px;font-size:7.00px;color:#222;left:1498.10px;">VNT</div>
<div class="t" style="top:408.00px;font-size:7.00px;color:#222;left:1558.70px;">1</div>
<div class="t" style="top:408.00px;font-size:7.00px;color:#222;letter-spacing:-0.088px;left:1570.50px;">500.0000</div>
<div class="t" style="top:408.00px;font-size:7.00px;color:#222;letter-spacing:0.012px;left:1642.30px;">500.0000</div>
<div class="t" style="top:408.00px;font-size:7.00px;color:#222;letter-spacing:-0.698px;left:1682.50px;">21</div>
<div class="t" style="top:408.00px;font-size:7.00px;color:#222;letter-spacing:-0.043px;left:1711.70px;">105.00</div>
<div class="t" style="top:408.00px;font-size:7.00px;color:#222;left:1773.40px;">500.00</div>
<div class="r" style="left:1326px;top:417px;width:471px;height:2px;background:#e8e8e8"></div>
<div class="t" style="top:419.00px;font-size:7.00px;color:#111;font-weight:bold;letter-spacing:-0.015px;left:1327.90px;">Suma žodžiais:</div>
<div class="t" style="top:419.00px;font-size:7.00px;color:#111;font-weight:bold;letter-spacing:-0.067px;left:1711.50px;">Iš viso</div>
<div class="t" style="top:419.00px;font-size:7.00px;color:#111;font-weight:bold;letter-spacing:0.057px;left:1773.00px;">500.00</div>
<div class="t" style="top:429.00px;font-size:7.00px;color:#111;font-weight:bold;left:1327.90px;">Šeši šimtai penki&nbsp; Eur 00 ct</div>
<div class="r" style="left:1564px;top:428px;width:233px;height:11px;background:#eef8e6"></div>
<div class="t" style="top:429.00px;font-size:7.00px;color:#111;font-weight:bold;letter-spacing:-0.013px;left:1600.20px;">Apmokestinama PVM</div>
<div class="t" style="top:429.00px;font-size:7.00px;color:#111;font-weight:bold;left:1694.60px;">Nuo sumos</div>
<div class="t" style="top:429.00px;font-size:7.00px;color:#111;font-weight:bold;letter-spacing:-0.072px;left:1759.60px;">PVM suma</div>
<div class="t" style="top:439.00px;font-size:7.00px;color:#111;font-weight:bold;letter-spacing:0.039px;left:1655.90px;">21 %</div>
<div class="t" style="top:439.00px;font-size:7.00px;color:#111;font-weight:bold;letter-spacing:0.057px;left:1711.20px;">500.00</div>
<div class="t" style="top:439.00px;font-size:7.00px;color:#111;font-weight:bold;letter-spacing:0.057px;left:1773.00px;">105.00</div>
<div class="t" style="top:449.00px;font-size:7.00px;color:#111;font-weight:bold;letter-spacing:-0.036px;left:1694.10px;">Iš viso PVM</div>
<div class="t" style="top:449.00px;font-size:7.00px;color:#111;font-weight:bold;letter-spacing:0.057px;left:1773.00px;">105.00</div>
<div class="r" style="left:1628px;top:457px;width:169px;height:2px;background:#3d3d3d"></div>
<div class="t" style="top:460.00px;font-size:8.00px;color:#111;letter-spacing:0.193px;left:1630.50px;-webkit-text-stroke:0.25px #111">Suma apmokėti</div>
<div class="t" style="top:460.00px;font-size:8.00px;color:#111;font-weight:bold;left:1770.70px;">605.00</div>
<div class="t" style="top:459.00px;font-size:7.00px;color:#111;font-weight:bold;letter-spacing:-0.019px;left:1327.80px;">Sąskaitą išrašė:</div>
<div class="t" style="top:479.00px;font-size:7.00px;color:#111;font-weight:bold;left:1327.80px;">Vadybininkas Vardenis Pavardenis</div>
<div class="t" style="top:499.00px;font-size:7.00px;color:#111;font-weight:bold;letter-spacing:-0.014px;left:1327.80px;">Prekes/paslaugas gavo:</div>
<div class="r" style="left:1326px;top:517px;width:302px;height:1px;background:#555"></div>
<div class="r" style="left:1326px;top:938px;width:471px;height:2px;background:#222"></div>
<div class="t" style="top:940.00px;font-size:7.00px;color:#111;font-weight:bold;left:1610.90px;">Tarpinė suma (be PVM):</div>
<div class="t" style="top:940.00px;font-size:7.00px;color:#111;font-weight:bold;letter-spacing:0.117px;left:1773.00px;">500.00</div>
<div class="r" style="left:1240px;top:628px;width:10px;height:14px;background:#e6e6e8;border-radius:4px"></div>
<div class="r" style="left:1243px;top:632px;width:4px;height:1px;background:#8a8a8a"></div>
<div class="r" style="left:1243px;top:635px;width:4px;height:1px;background:#8a8a8a"></div>
<div class="r" style="left:1243px;top:638px;width:4px;height:1px;background:#8a8a8a"></div>
</body></html>
